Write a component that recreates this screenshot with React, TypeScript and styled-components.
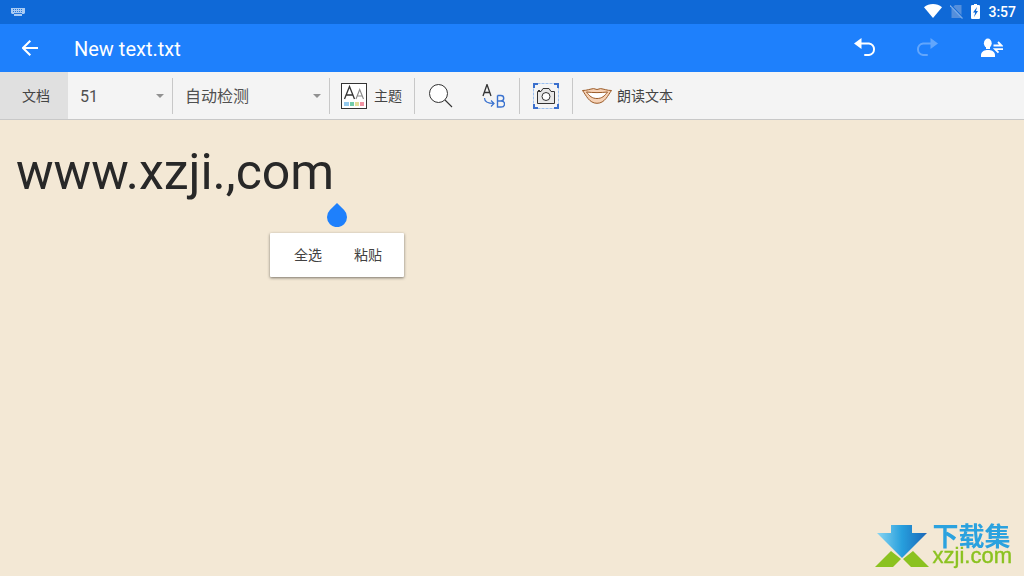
import React from 'react';
import styled, { createGlobalStyle } from 'styled-components';

const GlobalStyle = createGlobalStyle`
  *, *::before, *::after { box-sizing: border-box; }
  body {
    margin: 0;
    background: #f3e8d5;
    font-family: Roboto, "Noto Sans CJK SC", sans-serif;
  }
  button, select, textarea, input { font-family: inherit; }
`;

const Page = styled.div`
  min-height: 100vh;
  display: flex;
  flex-direction: column;
`;

const StatusBar = styled.div`
  height: 24px;
  padding: 0 8px 0 11px;
  background: #0f69d7;
  color: #fff;
  display: flex;
  align-items: center;
  justify-content: space-between;
`;

const StatusIcons = styled.div`
  display: flex;
  align-items: center;
  gap: 8px;
  svg { margin-bottom: 2px; }
`;

const Clock = styled.time`
  font-size: 14px;
  font-weight: 500;
  line-height: 24px;
`;

const AppBar = styled.header`
  height: 48px;
  background: #1e80fc;
  color: #fff;
  display: flex;
  align-items: center;
`;

const AppTitle = styled.h1`
  flex: 1;
  margin: 0;
  padding: 2px 0 0 14px;
  font-size: 20px;
  line-height: 24px;
  font-weight: 400;
`;

const BarButton = styled.button<{ $width: number }>`
  width: ${(p) => p.$width}px;
  height: 48px;
  padding: 0;
  border: 0;
  background: none;
  color: inherit;
  display: flex;
  align-items: center;
  justify-content: center;
  &:disabled { opacity: 0.3; }
`;

const Toolbar = styled.div`
  height: 48px;
  background: #f4f4f4;
  border-bottom: 1px solid #c8c8c8;
  display: flex;
  align-items: center;
`;

const ToolButton = styled.button<{ $active?: boolean; $wide?: boolean }>`
  min-width: 52px;
  height: 47px;
  padding: 0 ${(p) => (p.$active ? '18px 0 22px' : p.$wide ? '9px' : '0')};
  border: 0;
  background: ${(p) => (p.$active ? '#e0e0e0' : 'transparent')};
  color: #444;
  font-size: 14px;
  line-height: 20px;
  display: flex;
  align-items: center;
  justify-content: center;
  gap: 5px;
  white-space: nowrap;
`;

const ThemeButton = styled(ToolButton)`
  padding: 0 12px 0 11px;
  gap: 7px;
`;

const Divider = styled.span`
  width: 1px;
  height: 36px;
  background: #c8c8c8;
`;

const SelectBox = styled.label<{ $width: number }>`
  width: ${(p) => p.$width}px;
  height: 47px;
  display: grid;
  align-items: center;
  > * { grid-area: 1 / 1; }
  > svg { justify-self: end; margin-right: 8px; pointer-events: none; }
`;

const Select = styled.select`
  appearance: none;
  width: 100%;
  height: 47px;
  padding: 2px 24px 0 12px;
  border: 0;
  background: transparent;
  color: #505050;
  font-size: 16px;
  line-height: 24px;
`;

const Editor = styled.main`
  flex: 1;
  position: relative;
  display: flex;
`;

const TextArea = styled.textarea`
  flex: 1;
  padding: 22px 16px;
  border: 0;
  outline: 0;
  resize: none;
  background: transparent;
  color: #282828;
  font-size: 50px;
  line-height: 60px;
`;

const Handle = styled.svg`
  position: absolute;
  left: 327px;
  top: 83px;
`;

const Menu = styled.div`
  position: absolute;
  left: 270px;
  top: 113px;
  height: 44px;
  padding: 0 6px 0 8px;
  border-radius: 1px;
  background: #fff;
  box-shadow: 0 1px 3px rgba(0, 0, 0, 0.5);
  display: flex;
`;

const MenuButton = styled.button`
  padding: 0 16px;
  border: 0;
  background: none;
  color: #424242;
  font-size: 14px;
  line-height: 20px;
`;

const Watermark = styled.div`
  position: fixed;
  right: 12px;
  bottom: 8px;
  display: flex;
  align-items: flex-start;
  gap: 4px;
  pointer-events: none;
`;

const WatermarkText = styled.div`
  display: flex;
  flex-direction: column;
`;

const WatermarkName = styled.span`
  color: #2ba2df;
  font-family: "Noto Sans CJK SC", sans-serif;
  font-size: 26px;
  font-weight: 700;
  line-height: 22px;
`;

const WatermarkSite = styled.span`
  color: #8bc220;
  font-family: "Liberation Sans", sans-serif;
  font-size: 22px;
  line-height: 20px;
  -webkit-text-stroke: 0.4px #8bc220;
`;

const Caret = () => (
  <svg width="8" height="4" viewBox="0 0 8 4" aria-hidden="true">
    <path d="M0 0h8L4 4z" fill="#919191" />
  </svg>
);

const KeyboardIcon = () => (
  <svg width="14" height="8" viewBox="0 0 14 8" aria-hidden="true">
    <path d="M0 0h14v5l-1 1H1L0 5z" fill="#a9cbf3" />
    <path d="M2 1.5h10M2 3.5h10" stroke="#2878dc" strokeDasharray="1 1" />
    <path d="M3 5h8v3H3z" fill="#a9cbf3" />
    <path d="M3 5.5h8" stroke="#2878dc" />
  </svg>
);

const WifiIcon = () => (
  <svg width="18" height="14" viewBox="0 0 18 14" aria-hidden="true">
    <path d="M0 3.2C5-1 13-1 18 3.2L9 14z" fill="#fff" />
  </svg>
);

const NoSimIcon = () => (
  <svg width="13" height="15" viewBox="0 0 13 15" aria-hidden="true">
    <path d="M5 1h6.5v13h-10V4.5z" fill="#548fdc" />
    <path d="M0 0L13 13.5" stroke="#0f69d7" strokeWidth="1.2" />
    <path d="M0 1.5L12.5 14.5" stroke="#78abe9" strokeWidth="1.2" />
  </svg>
);

const BatteryIcon = () => (
  <svg width="9" height="15" viewBox="0 0 9 15" aria-hidden="true">
    <path d="M3 0h3v1h2.2l.8.8v12.4l-.8.8H.8l-.8-.8V1.8L.8 1H3z" fill="#fff" />
    <path d="M6 3L2 8.5h2.2L3 13l4-6H5z" fill="#0f69d7" />
  </svg>
);

const BackIcon = () => (
  <svg width="16" height="16" viewBox="0 0 16 16" fill="none" stroke="#fff" strokeWidth="2" aria-hidden="true">
    <path d="M16 8H1.5M8.3.7L1 8l7.3 7.3" />
  </svg>
);

const UndoIcon = ({ flip = false }: { flip?: boolean }) => (
  <svg width="22" height="20" viewBox="0 0 22 20" aria-hidden="true">
    <g transform={flip ? 'translate(22 0) scale(-1 1)' : undefined}>
      <path d="M0 5.5L7.5 0v11z" fill="#fff" />
      <path d="M6 5.5h9a5.8 5.8 0 0 1 0 11.500H11" fill="none" stroke="#fff" strokeWidth="2" strokeLinecap="round" />
    </g>
  </svg>
);

const ShareUserIcon = () => (
  <svg width="24" height="20" viewBox="-2 0 24 20" aria-hidden="true">
    <ellipse cx="6.8" cy="5.2" rx="3.9" ry="4.6" fill="#fff" />
    <path d="M5 8h4v3H5z" fill="#fff" />
    <path d="M0 19v-2.5C.5 13.3 3.600 12 7 12s6.500 1.300 7 4.500V19z" fill="#fff" />
    <path d="M12.500 7.500h8L17 4M22 11.200h-8l3.500 3.500" fill="none" stroke="#fff" strokeWidth="1.800" />
  </svg>
);

const ThemeIcon = () => (
  <svg width="26" height="26" viewBox="0 0 26 26" aria-hidden="true">
    <rect x=".5" y=".5" width="25" height="25" fill="#fff" stroke="#333" />
    <path d="M3.5 16L8.5 3.5L13.5 16M5.2 12h6.6" fill="none" stroke="#333" strokeWidth="1.3" />
    <path d="M15 16l3.7-9.5L22.5 16M16.4 13h4.7" fill="none" stroke="#888" strokeWidth="1.1" />
    <path d="M3 19h5v4H3z" fill="#92c9ed" />
    <path d="M9 19h4v4H9z" fill="#72ccaa" />
    <path d="M14 19h4v4h-4z" fill="#e2dd99" />
    <path d="M19 19h4v4h-4z" fill="#f092a2" />
  </svg>
);

const SearchIcon = () => (
  <svg width="24" height="24" viewBox="0 0 24 24" aria-hidden="true">
    <circle cx="9.5" cy="9.5" r="9" fill="#fff" stroke="#333" />
    <path d="M16 16l7 7" stroke="#333" strokeWidth="1.1" />
  </svg>
);

const ReplaceIcon = () => (
  <svg width="24" height="24" viewBox="0 0 24 24" fill="none" aria-hidden="true">
    <path d="M2 12L6 .5L10 12M3.3 8.5h5.4" stroke="#333" strokeWidth="1.3" />
    <path d="M16.5 11.500v11.500h3.500c4.700 0 4.700-6 0-6h-3.500M19.800 17c3.900 0 3.900-5.500 0-5.500h-3.300" stroke="#3a72cf" strokeWidth="1.4" />
    <path d="M3.5 14c0 4 3 5.500 9.500 5.500M10 16.500l3 3-3 3" stroke="#3a72cf" strokeWidth="1.2" />
  </svg>
);

const CameraIcon = () => (
  <svg width="26" height="26" viewBox="0 0 26 26" fill="none" aria-hidden="true">
    <rect x=".5" y=".5" width="25" height="25" stroke="#9bc0f0" strokeDasharray="3 1" />
    <path d="M0 1h5M1 0v5M21 1h5M25 0v5M0 25h5M1 21v5M21 25h5M25 21v5" stroke="#3a6fcd" strokeWidth="2" />
    <path d="M4.5 8.5H8l2-3h6l2 3h3.5v12h-17z" fill="#e8e8e8" stroke="#333" />
    <circle cx="13" cy="13.5" r="4" fill="#fff" stroke="#333" />
    <path d="M5 7.5h2" stroke="#333" />
  </svg>
);

const MouthIcon = () => (
  <svg width="30" height="16" viewBox="0 0 30 16" aria-hidden="true">
    <path d="M.5 2.5C5 2.5 8 1 11.5.6L15 1.5l3.5-.9C22 1 25 2.5 29.5 2.5 26 7 23 15.300 15 15.300S4 7 .5 2.5z" fill="#f6d2b6" stroke="#9b5b28" />
    <path d="M4.5 4c7 .8 14 .8 21 0-3 4-5.500 6.500-10.500 6.500S7.500 8 4.500 4z" fill="#fff" stroke="#9b5b28" />
  </svg>
);

const ArrowLogo = () => (
  <svg width="54" height="44" viewBox="0 0 54 44" aria-hidden="true">
    <defs>
      <linearGradient id="arrow-fill" x1="0" y1="0" x2="1" y2="0">
        <stop offset="0" stopColor="#8ad6f2" />
        <stop offset=".5" stopColor="#279fdd" />
        <stop offset="1" stopColor="#1b66b7" />
      </linearGradient>
    </defs>
    <path d="M16 1h21v8h15L27 34 2 9h14z" fill="url(#arrow-fill)" />
    <path d="M0 43l16-16 10 8-8 8zM54 43L38 27l-10 8 8 8z" fill="#8bc220" />
  </svg>
);

export default function App() {
  return (
    <Page>
      <GlobalStyle />
      <StatusBar>
        <KeyboardIcon />
        <StatusIcons>
          <WifiIcon />
          <NoSimIcon />
          <BatteryIcon />
          <Clock>3:57</Clock>
        </StatusIcons>
      </StatusBar>
      <AppBar>
        <BarButton $width={60} aria-label="Back"><BackIcon /></BarButton>
        <AppTitle>New text.txt</AppTitle>
        <BarButton $width={62} aria-label="Undo"><UndoIcon /></BarButton>
        <BarButton $width={62} aria-label="Redo" disabled><UndoIcon flip /></BarButton>
        <BarButton $width={66} aria-label="Share"><ShareUserIcon /></BarButton>
      </AppBar>
      <Toolbar>
        <ToolButton $active>文档</ToolButton>
        <SelectBox $width={104}>
          <Select aria-label="字号" defaultValue="51">
            <option>51</option>
          </Select>
          <Caret />
        </SelectBox>
        <Divider />
        <SelectBox $width={156}>
          <Select aria-label="编码" defaultValue="自动检测">
            <option>自动检测</option>
          </Select>
          <Caret />
        </SelectBox>
        <Divider />
        <ThemeButton><ThemeIcon />主题</ThemeButton>
        <Divider />
        <ToolButton aria-label="查找"><SearchIcon /></ToolButton>
        <ToolButton aria-label="替换"><ReplaceIcon /></ToolButton>
        <Divider />
        <ToolButton aria-label="相机"><CameraIcon /></ToolButton>
        <Divider />
        <ToolButton $wide><MouthIcon />朗读文本</ToolButton>
      </Toolbar>
      <Editor>
        <TextArea aria-label="文本" defaultValue="www.xzji.,com" spellCheck={false} />
        <Handle width="20" height="24" viewBox="0 0 20 24" aria-hidden="true">
          <path d="M10 0l7.1 7.1a10 10 0 1 1-14.2 0z" fill="#1e80fc" />
        </Handle>
        <Menu>
          <MenuButton>全选</MenuButton>
          <MenuButton>粘贴</MenuButton>
        </Menu>
      </Editor>
      <Watermark>
        <ArrowLogo />
        <WatermarkText>
          <WatermarkName>下载集</WatermarkName>
          <WatermarkSite>xzji.com</WatermarkSite>
        </WatermarkText>
      </Watermark>
    </Page>
  );
}
